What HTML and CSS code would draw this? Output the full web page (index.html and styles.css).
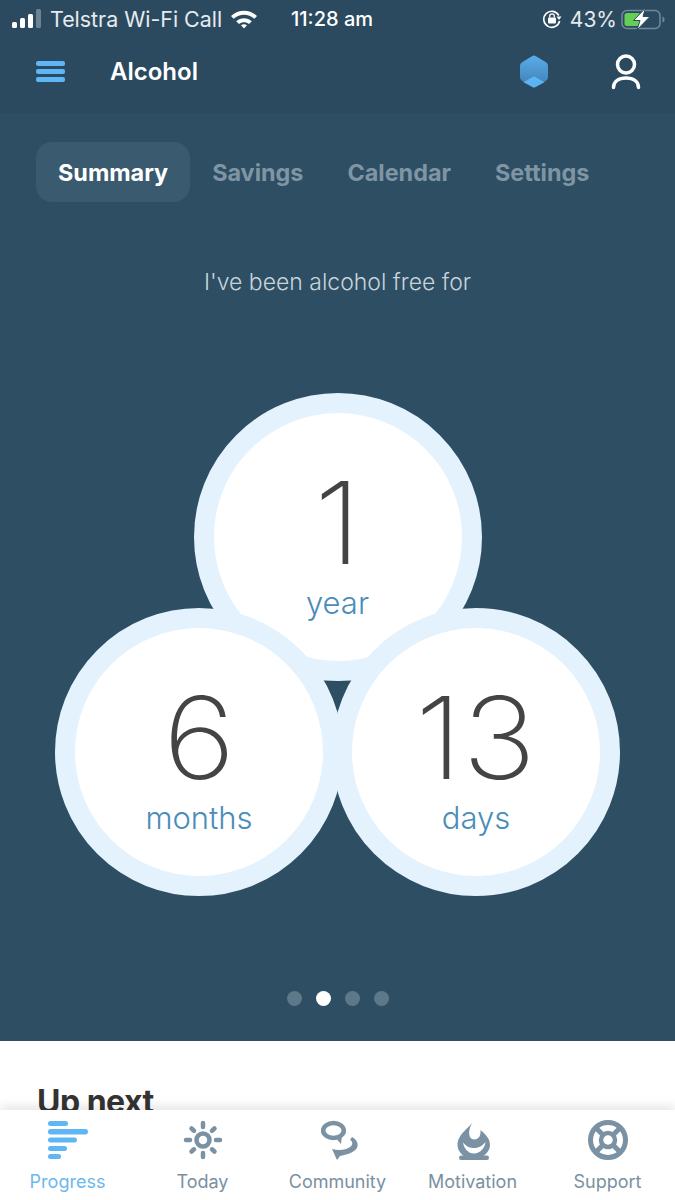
FILE: index.html
```html
<!DOCTYPE html>
<html lang="en">
<head>
    <meta charset="UTF-8">
    <title>Alcohol</title>
    <link rel="stylesheet" href="styles.css">
</head>
<body>
    <div class="phone">
        <header class="top-area">
            <div class="status-bar">
                <div class="status-left">
                    <svg width="31" height="20" viewBox="0 0 31 20">
                        <rect x="0" y="13" width="5" height="6" rx="1.5" fill="#fff"/>
                        <rect x="8" y="9" width="5" height="10" rx="1.5" fill="#fff"/>
                        <rect x="16" y="5" width="5" height="14" rx="1.5" fill="#fff"/>
                        <rect x="24" y="0" width="5" height="19" rx="1.5" fill="#6d8391"/>
                    </svg>
                    <span class="carrier">Telstra Wi-Fi Call</span>
                    <svg width="28" height="20" viewBox="0 0 28 20">
                        <path d="M1 7C8.500 0 19.500 0 27 7L24.300 9.800C18.300 4.500 9.700 4.500 3.700 9.800Z" fill="#fff"/>
                        <path d="M6.200 12.200C10.700 8.300 17.300 8.300 21.800 12.200L19 15C16 12.600 12 12.600 9 15Z" fill="#fff"/>
                        <path d="M11 16.300C12.800 15 15.200 15 17 16.300L14 19.500Z" fill="#fff"/>
                    </svg>
                </div>
                <span class="clock">11:28 am</span>
                <div class="status-right">
                    <svg width="20" height="20" viewBox="0 0 20 20">
                        <path d="M16.800 6.500A8 8 0 1 0 17.600 12" fill="none" stroke="#fff" stroke-width="1.600"/>
                        <path d="M14.500 7.500H19.500L17 11Z" fill="#fff"/>
                        <rect x="6" y="8.500" width="8" height="6" rx="1" fill="#fff"/>
                        <path d="M7.700 8.500V7.200A2.300 2.300 0 0 1 12.300 7.200V8.500" fill="none" stroke="#fff" stroke-width="1.300"/>
                    </svg>
                    <span class="battery-pct">43%</span>
                    <svg class="battery" width="46" height="22" viewBox="0 0 46 22">
                        <rect x="2" y="2.500" width="38" height="18" rx="5" fill="none" stroke="#71899a" stroke-width="1.500"/>
                        <rect x="4.500" y="5" width="16" height="13" rx="2.500" fill="#63cf55"/>
                        <path d="M42.500 8.500C44 9 44.500 10 44.500 11.500C44.500 13 44 14 42.500 14.500Z" fill="#71899a"/>
                        <path d="M25.500 0L13.500 12.500H20L17 22L30 8.500H23Z" fill="#fff" stroke="#2b4a5f" stroke-width="1"/>
                    </svg>
                </div>
            </div>
            <nav class="nav-bar">
                <div class="nav-left">
                    <div class="burger"><span></span><span></span><span></span></div>
                    <span class="nav-title">Alcohol</span>
                </div>
                <div class="nav-right">
                    <svg width="30" height="33" viewBox="0 0 30 33">
                        <defs>
                            <linearGradient id="hex-fill" x1="0" y1="0" x2="0" y2="1">
                                <stop offset="0" stop-color="#5aace9"/>
                                <stop offset="1" stop-color="#3f7fb3"/>
                            </linearGradient>
                        </defs>
                        <path d="M13 1.200Q15 0 17 1.200L27 7.300Q29 8.500 29 10.800V22.200Q29 24.500 27 25.700L17 31.800Q15 33 13 31.800L3 25.700Q1 24.500 1 22.200V10.800Q1 8.500 3 7.300Z" fill="url(#hex-fill)"/>
                        <path d="M13 22.200Q15 21 17 22.200L25.500 27.200L17 31.800Q15 33 13 31.800L4.500 27.200Z" fill="#5ab3f2"/>
                    </svg>
                    <svg width="30" height="36" viewBox="0 0 30 36">
                        <circle cx="15" cy="10.500" r="8.500" fill="none" stroke="#fff" stroke-width="3.500"/>
                        <path d="M2.500 33.500C2.500 27 8 24 15 24C22 24 27.500 27 27.500 33.500" fill="none" stroke="#fff" stroke-width="3.500" stroke-linecap="round"/>
                    </svg>
                </div>
            </nav>
        </header>

        <main class="summary-panel">
            <div class="tabs">
                <span class="tab active">Summary</span>
                <span class="tab">Savings</span>
                <span class="tab">Calendar</span>
                <span class="tab">Settings</span>
            </div>
            <p class="intro">I've been alcohol free for</p>
            <div class="circles">
                <div class="circle">
                    <span class="circle-number">1</span>
                    <span class="circle-unit">year</span>
                </div>
                <div class="circle-row">
                    <div class="circle">
                        <span class="circle-number">6</span>
                        <span class="circle-unit">months</span>
                    </div>
                    <div class="circle">
                        <span class="circle-number">13</span>
                        <span class="circle-unit">days</span>
                    </div>
                </div>
            </div>
            <div class="dots">
                <span class="dot"></span>
                <span class="dot current"></span>
                <span class="dot"></span>
                <span class="dot"></span>
            </div>
        </main>

        <section class="up-next">
            <h2>Up next</h2>
        </section>

        <footer class="tab-bar">
            <div class="tab-item selected">
                <svg width="42" height="40" viewBox="0 0 42 40">
                    <g fill="#5fb6f4">
                        <rect x="1" y="1" width="20" height="5" rx="2.500"/>
                        <rect x="1" y="9" width="40" height="5.500" rx="2.700"/>
                        <rect x="1" y="17.500" width="29" height="5" rx="2.500"/>
                        <rect x="1" y="26" width="19" height="5" rx="2.500"/>
                        <rect x="1" y="34" width="13" height="5" rx="2.500"/>
                    </g>
                </svg>
                <span>Progress</span>
            </div>
            <div class="tab-item">
                <svg width="42" height="40" viewBox="0 0 42 40">
                    <circle cx="21" cy="20" r="6.500" fill="none" stroke="#7a92a3" stroke-width="4.500"/>
                    <g stroke="#7a92a3" stroke-width="4.500" stroke-linecap="round">
                        <path d="M21 3V7"/>
                        <path d="M21 33V37"/>
                        <path d="M4 20H8"/>
                        <path d="M34 20H38"/>
                        <path d="M9.500 8.500L12 10.700"/>
                        <path d="M32.500 8.500L30 10.700"/>
                        <path d="M9.500 31.500L12 29.300"/>
                        <path d="M32.500 31.500L30 29.300"/>
                    </g>
                </svg>
                <span>Today</span>
            </div>
            <div class="tab-item">
                <svg width="42" height="40" viewBox="0 0 42 40">
                    <ellipse cx="16.500" cy="10.500" rx="10.300" ry="7.500" fill="none" stroke="#7a92a3" stroke-width="4.500"/>
                    <path d="M17 16L24 24L25 15Z" fill="#7a92a3"/>
                    <path d="M35 17C41 20 43 27 37 31C33 34 27 35 23 36L20 40L15 29C22 31 29 30 33 27C36 25 36 21 33 20Z" fill="#7a92a3"/>
                </svg>
                <span>Community</span>
            </div>
            <div class="tab-item">
                <svg width="42" height="40" viewBox="0 0 42 40">
                    <path d="M21 1C18 8 6 13 5.500 25C5.500 30 9 34 13 37H30C34.500 34 38 30 38 25C38 18 33 14 28.500 10C29 15 27 19.500 22 19.500C16.500 19.500 15 11 21 1Z" fill="#7a92a3"/>
                    <path d="M11 22.500C15 27 18 28 22 28C26 28 30 26.500 33.500 22C33 28 28 33.500 22 33.500C16 33.500 12 28.500 11 22.500Z" fill="#fff"/>
                    <rect x="7" y="35.500" width="30" height="4.500" rx="2.200" fill="#7a92a3"/>
                </svg>
                <span>Motivation</span>
            </div>
            <div class="tab-item">
                <svg width="42" height="40" viewBox="0 0 42 40">
                    <g fill="none" stroke="#7a92a3">
                        <circle cx="21" cy="20" r="17.500" stroke-width="5"/>
                        <circle cx="21" cy="20" r="7" stroke-width="4.500"/>
                        <path d="M10 9L15.500 14.500M32 9L26.500 14.500M10 31L15.500 25.500M32 31L26.500 25.500" stroke-width="5"/>
                    </g>
                </svg>
                <span>Support</span>
            </div>
        </footer>
    </div>
</body>
</html>
```

FILE: styles.css
```css
* {
    margin: 0;
    padding: 0;
    box-sizing: border-box;
}

body {
    background: #fff;
    font-family: Inter, "Liberation Sans", sans-serif;
}

.phone {
    width: 675px;
    height: 1200px;
    display: flex;
    flex-direction: column;
    overflow: hidden;
}

/* top bars */
.top-area {
    height: 113px;
    background-color: #2b4a5f;
    color: #fff;
}
.status-bar {
    height: 38px;
    padding: 0 9px 0 12px;
    display: grid;
    grid-template-columns: 279px auto 1fr;
    align-items: center;
    font-size: 20px;
}
.status-left {
    display: flex;
    align-items: center;
    gap: 8px;
}
.status-left svg:first-child {
    margin-right: -1px;
}
.carrier {
    font-size: 21.4px;
    color: #e6ebef;
}
.clock {
    font-weight: 500;
}
.status-right {
    display: flex;
    align-items: center;
    justify-content: flex-end;
    gap: 8px;
}
.battery-pct {
    font-size: 21px;
    color: #e6ebef;
}
.battery {
    margin-left: -5px;
}
.nav-bar {
    height: 75px;
    padding: 0 34px 8px 36px;
    display: flex;
    align-items: center;
    justify-content: space-between;
}
.nav-left {
    display: flex;
    align-items: center;
    gap: 45px;
}
.burger {
    width: 29px;
    display: flex;
    flex-direction: column;
    gap: 3px;
}
.burger span {
    height: 5px;
    border-radius: 2px;
    background-color: #5fb6f4;
}
.nav-title {
    font-size: 24px;
    font-weight: 600;
}
.nav-right {
    display: flex;
    align-items: center;
    gap: 62px;
}

/* summary area */
.summary-panel {
    height: 928px;
    padding-top: 29px;
    background-color: #2d4e63;
}
.tabs {
    display: flex;
    padding-left: 36px;
}
.tab {
    height: 60px;
    padding: 0 22px;
    display: flex;
    align-items: center;
    border-radius: 16px;
    font-size: 23.4px;
    font-weight: 700;
    color: #7f95a3;
}
.tab.active {
    background-color: #3a5a70;
    color: #fff;
}
.intro {
    margin-top: 65px;
    line-height: 30px;
    text-align: center;
    font-size: 23px;
    font-weight: 300;
    color: #c8d3da;
}
.circles {
    margin-top: 96px;
    display: flex;
    flex-direction: column;
    align-items: center;
}
.circle-row {
    margin-top: -73px;
    display: flex;
}
.circle-row .circle + .circle {
    margin-left: -11px;
}
.circle {
    width: 288px;
    height: 288px;
    border: 20px solid #e3f2fc;
    border-radius: 50%;
    background-color: #fff;
    display: flex;
    flex-direction: column;
    align-items: center;
}
.circle-number {
    margin-top: 54px;
    height: 112px;
    line-height: 112px;
    font-size: 114px;
    font-weight: 150;
    color: #444;
    transform: scaleX(1.09);
}
.circle-unit {
    margin-top: 6px;
    line-height: 36px;
    font-size: 31px;
    font-weight: 300;
    color: #4a8db8;
}
.dots {
    margin-top: 95px;
    display: flex;
    justify-content: center;
    gap: 14px;
}
.dot {
    width: 15px;
    height: 15px;
    border-radius: 50%;
    background-color: #5d7889;
}
.dot.current {
    background-color: #fff;
}

/* clipped content under the tab bar */
.up-next {
    height: 69px;
    padding: 41px 0 0 37px;
    overflow: hidden;
    background-color: #fff;
}
.up-next h2 {
    line-height: 40px;
    font-size: 32px;
    font-weight: 700;
    letter-spacing: -0.5px;
    color: #333;
}

/* bottom tab bar */
.tab-bar {
    height: 90px;
    position: relative;
    display: grid;
    grid-template-columns: repeat(5, 1fr);
    background-color: #fff;
    box-shadow: 0 -4px 10px rgba(0, 0, 0, 0.1);
}
.tab-item {
    padding-top: 10px;
    display: flex;
    flex-direction: column;
    align-items: center;
    gap: 11px;
    font-size: 18px;
    color: #7a909f;
}
.tab-item.selected {
    color: #6bb8ef;
}
```
